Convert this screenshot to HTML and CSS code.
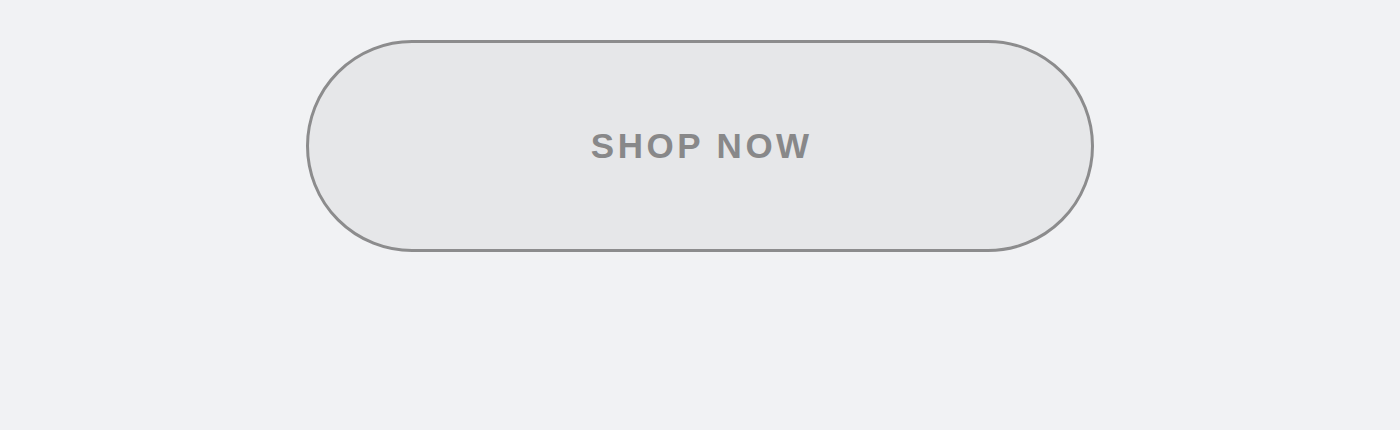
FILE: index.html
```html
<!DOCTYPE html>
<html lang="en">
<head>
    <meta charset="UTF-8">
    <meta name="viewport" content="width=device-width, initial-scale=1.0">
    <title>Shop</title>

    <link rel="stylesheet" href="styles.css">
</head>
<body>
    <div class="container">
        <!-- Call to action -->
        <a class="shop-btn" href="/shop">Shop Now</a>
    </div>
</body>
</html>
```
FILE: styles.css
```css
body {
    font-family: "Liberation Sans", Arial, sans-serif;
    margin: 0;
    padding: 0;
    background-color: #f1f2f4;
}
.container {
    display: flex;
    justify-content: center;
    padding-top: 40px;
}
.shop-btn {
    display: flex;
    align-items: center;
    justify-content: center;
    box-sizing: border-box;
    width: 788px;
    height: 212px;
    padding-left: 3.5px;
    background-color: #e6e7e9;
    border: 3px solid #8c8c8d;
    border-radius: 106px;
    color: #888889;
    font-size: 35px;
    font-weight: bold;
    letter-spacing: 3.5px;
    text-transform: uppercase;
    text-decoration: none;
}
```
